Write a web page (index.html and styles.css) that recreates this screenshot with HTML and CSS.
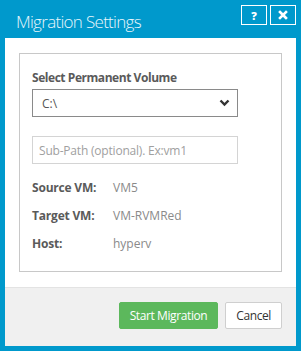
FILE: index.html
```html
<!DOCTYPE html>
<html>
<head>
<meta charset="utf-8">
<link rel="stylesheet" href="styles.css">
</head>
<body>
<div class="dialog">
  <div class="header">
    <div class="title">Migration Settings</div>
    <div class="hbtns">
      <div class="hbtn">?</div>
      <div class="hbtn">
        <svg width="10" height="10" viewBox="0 0 10 10"><path d="M2 2 L8 8 M8 2 L2 8" stroke="#fff" stroke-width="2.6" stroke-linecap="square"/></svg>
      </div>
    </div>
  </div>
  <div class="content">
    <div class="panel">
      <div class="label">Select Permanent Volume</div>
      <div class="select">
        <span>C:\</span>
        <svg width="11" height="8" viewBox="0 0 11 8"><path d="M1.5 1.5 L5.5 5.5 L9.5 1.5" fill="none" stroke="#333" stroke-width="2.4"/></svg>
      </div>
      <div class="input">Sub-Path (optional). Ex:vm1</div>
      <div class="rows">
        <div class="row"><span class="k">Source VM:</span><span class="v">VM5</span></div>
        <div class="row"><span class="k">Target VM:</span><span class="v">VM-RVMRed</span></div>
        <div class="row"><span class="k">Host:</span><span class="v">hyperv</span></div>
      </div>
    </div>
  </div>
  <div class="footer">
    <div class="btn primary">Start Migration</div>
    <div class="btn">Cancel</div>
  </div>
</div>
</body>
</html>
```
FILE: styles.css
```css
html, body {
  margin: 0;
  padding: 0;
  background: #0099cc;
}
.dialog {
  width: 301px;
  height: 351px;
  box-sizing: border-box;
  background: #0099cc;
  padding: 0 5px 5px 5px;
  display: flex;
  flex-direction: column;
  font-family: "Open Sans", sans-serif;
}
.header {
  height: 38px;
  display: flex;
  justify-content: space-between;
  align-items: flex-start;
}
.title {
  color: #e8f6fb;
  font-weight: 300;
  font-size: 17px;
  letter-spacing: -0.7px;
  padding-left: 11px;
  padding-top: 10px;
  line-height: 24px;
}
.hbtns {
  display: flex;
  gap: 3px;
  padding-top: 5px;
}
.hbtn {
  width: 24px;
  height: 18px;
  border: 1px solid #fff;
  color: #fff;
  font-weight: 800;
  font-size: 11px;
  display: flex;
  align-items: center;
  justify-content: center;
}
.content {
  background: #fff;
  padding: 15px 14px 15px 14px;
}
.panel {
  border: 1px solid #c8c8c8;
  height: 219px;
  box-sizing: border-box;
  padding: 16px 12px 0 12px;
}
.label {
  font-weight: 700;
  font-size: 12px;
  letter-spacing: -0.45px;
  color: #5a5a5a;
  line-height: 16px;
  height: 19px;
}
.select {
  width: 206px;
  height: 28px;
  box-sizing: border-box;
  border: 1px solid #8a8a8a;
  display: flex;
  align-items: center;
  justify-content: space-between;
  padding: 0 7px 0 9px;
  font-size: 12px;
  color: #555;
}
.input {
  margin-top: 19px;
  width: 206px;
  height: 28px;
  box-sizing: border-box;
  border: 1px solid #d4d4d4;
  padding: 0 6px;
  display: flex;
  align-items: center;
  font-size: 12px;
  letter-spacing: -0.2px;
  color: #a0a0a0;
}
.rows {
  margin-top: 9px;
}
.row {
  display: flex;
  height: 28px;
  align-items: center;
  font-size: 12px;
}
.k {
  width: 81px;
  font-weight: 700;
  color: #5a5a5a;
  letter-spacing: -0.2px;
}
.v {
  color: #8a8a8a;
}
.footer {
  flex: 1;
  background: #f0f0f0;
  border-top: 1px solid #e3e3e3;
  display: flex;
  justify-content: flex-end;
  align-items: flex-start;
  gap: 7px;
  padding: 14px 14px 0 0;
}
.btn {
  height: 27px;
  box-sizing: border-box;
  border: 1px solid #cfcfcf;
  background: #fff;
  color: #333;
  font-size: 12px;
  letter-spacing: -0.4px;
  display: flex;
  align-items: center;
  padding: 0 10px;
  border-radius: 2px;
}
.btn.primary {
  background: #5cb85c;
  border-color: #5cb85c;
  color: #fff;
}
```
